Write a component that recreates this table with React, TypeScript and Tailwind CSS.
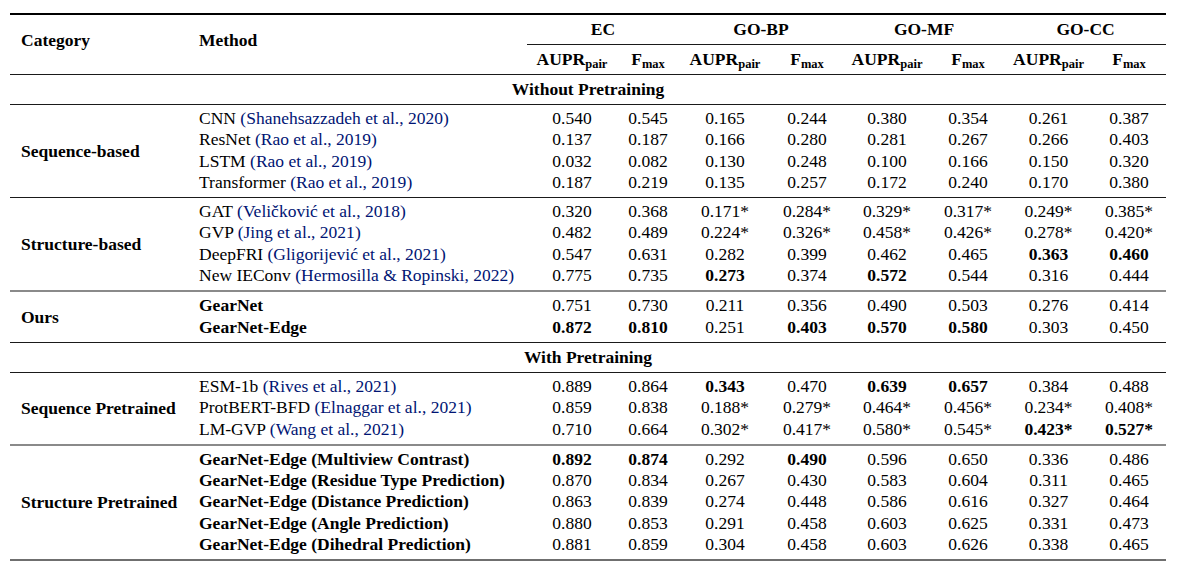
type Row = { name: string; cite?: string; bold?: boolean; vals: string[] };
type Group = { label: string; rule: string; rows: Row[] };

const thin = "border-b border-[#1a1a1a]";
const soft = "border-b-2 border-[#8a8a8a]";

const without: Group[] = [
  {
    label: "Sequence-based",
    rule: thin,
    rows: [
      { name: "CNN", cite: "Shanehsazzadeh et al., 2020", vals: ["0.540", "0.545", "0.165", "0.244", "0.380", "0.354", "0.261", "0.387"] },
      { name: "ResNet", cite: "Rao et al., 2019", vals: ["0.137", "0.187", "0.166", "0.280", "0.281", "0.267", "0.266", "0.403"] },
      { name: "LSTM", cite: "Rao et al., 2019", vals: ["0.032", "0.082", "0.130", "0.248", "0.100", "0.166", "0.150", "0.320"] },
      { name: "Transformer", cite: "Rao et al., 2019", vals: ["0.187", "0.219", "0.135", "0.257", "0.172", "0.240", "0.170", "0.380"] },
    ],
  },
  {
    label: "Structure-based",
    rule: soft,
    rows: [
      { name: "GAT", cite: "Veličković et al., 2018", vals: ["0.320", "0.368", "0.171*", "0.284*", "0.329*", "0.317*", "0.249*", "0.385*"] },
      { name: "GVP", cite: "Jing et al., 2021", vals: ["0.482", "0.489", "0.224*", "0.326*", "0.458*", "0.426*", "0.278*", "0.420*"] },
      { name: "DeepFRI", cite: "Gligorijević et al., 2021", vals: ["0.547", "0.631", "0.282", "0.399", "0.462", "0.465", "!0.363", "!0.460"] },
      { name: "New IEConv", cite: "Hermosilla & Ropinski, 2022", vals: ["0.775", "0.735", "!0.273", "0.374", "!0.572", "0.544", "0.316", "0.444"] },
    ],
  },
  {
    label: "Ours",
    rule: thin,
    rows: [
      { name: "GearNet", bold: true, vals: ["0.751", "0.730", "0.211", "0.356", "0.490", "0.503", "0.276", "0.414"] },
      { name: "GearNet-Edge", bold: true, vals: ["!0.872", "!0.810", "0.251", "!0.403", "!0.570", "!0.580", "0.303", "0.450"] },
    ],
  },
];

const withPre: Group[] = [
  {
    label: "Sequence Pretrained",
    rule: soft,
    rows: [
      { name: "ESM-1b", cite: "Rives et al., 2021", vals: ["0.889", "0.864", "!0.343", "0.470", "!0.639", "!0.657", "0.384", "0.488"] },
      { name: "ProtBERT-BFD", cite: "Elnaggar et al., 2021", vals: ["0.859", "0.838", "0.188*", "0.279*", "0.464*", "0.456*", "0.234*", "0.408*"] },
      { name: "LM-GVP", cite: "Wang et al., 2021", vals: ["0.710", "0.664", "0.302*", "0.417*", "0.580*", "0.545*", "!0.423*", "!0.527*"] },
    ],
  },
  {
    label: "Structure Pretrained",
    rule: "border-b-2 border-[#6f6f6f]",
    rows: [
      { name: "GearNet-Edge (Multiview Contrast)", bold: true, vals: ["!0.892", "!0.874", "0.292", "!0.490", "0.596", "0.650", "0.336", "0.486"] },
      { name: "GearNet-Edge (Residue Type Prediction)", bold: true, vals: ["0.870", "0.834", "0.267", "0.430", "0.583", "0.604", "0.311", "0.465"] },
      { name: "GearNet-Edge (Distance Prediction)", bold: true, vals: ["0.863", "0.839", "0.274", "0.448", "0.586", "0.616", "0.327", "0.464"] },
      { name: "GearNet-Edge (Angle Prediction)", bold: true, vals: ["0.880", "0.853", "0.291", "0.458", "0.603", "0.625", "0.331", "0.473"] },
      { name: "GearNet-Edge (Dihedral Prediction)", bold: true, vals: ["0.881", "0.859", "0.304", "0.458", "0.603", "0.626", "0.338", "0.465"] },
    ],
  },
];

function GroupRows({ g }: { g: Group }) {
  return (
    <>
      {g.rows.map((r, i) => {
        const first = i === 0;
        const last = i === g.rows.length - 1;
        const pad = `${first ? "pt-[3px]" : "pt-0"} ${last ? `pb-[4px] ${g.rule}` : "pb-0"}`;
        return (
          <tr key={r.name}>
            {first && (
              <td rowSpan={g.rows.length} className={`pl-[11px] align-middle font-bold text-left ${g.rule}`}>
                {g.label}
              </td>
            )}
            <td className={`pl-[11px] text-left whitespace-nowrap leading-[21.3px] ${pad} ${r.bold ? "font-bold" : ""}`}>
              {r.name}
              {r.cite && <span className="text-[#001473]"> ({r.cite})</span>}
            </td>
            {r.vals.map((v, j) => {
              const b = v.startsWith("!");
              return (
                <td key={j} className={`text-center whitespace-nowrap leading-[21.3px] ${pad} ${b ? "font-bold" : ""}`}>
                  {b ? v.slice(1) : v}
                </td>
              );
            })}
          </tr>
        );
      })}
    </>
  );
}

function Banner({ text }: { text: string }) {
  return (
    <tr>
      <td colSpan={10} className={`text-center font-bold leading-[29px] ${thin}`}>
        {text}
      </td>
    </tr>
  );
}

export default function App() {
  const tasks = ["EC", "GO-BP", "GO-MF", "GO-CC"];
  return (
    <div className="w-[1177px] h-[566px] bg-white pt-[13px] pl-[10px] text-black font-[family-name:Liberation_Serif,serif] text-[17.5px]">
      <table className="border-separate border-spacing-0 table-fixed w-[1156px]">
        <colgroup>
          <col className="w-[178px]" />
          <col className="w-[339px]" />
          <col className="w-[90px]" />
          <col className="w-[62px]" />
          <col className="w-[92px]" />
          <col className="w-[72px]" />
          <col className="w-[88px]" />
          <col className="w-[74px]" />
          <col className="w-[87px]" />
          <col className="w-[74px]" />
        </colgroup>
        <thead>
          <tr>
            <th rowSpan={2} className={`text-left pl-[11px] pb-[8px] align-middle font-bold border-t-2 border-t-black ${thin}`}>
              Category
            </th>
            <th rowSpan={2} className={`text-left pl-[11px] pb-[8px] align-middle font-bold border-t-2 border-t-black ${thin}`}>
              Method
            </th>
            {tasks.map((t) => (
              <th key={t} colSpan={2} className={`text-center font-bold leading-[29px] border-t-2 border-t-black ${thin}`}>
                {t}
              </th>
            ))}
          </tr>
          <tr>
            {tasks.map((t) => (
              <>
                <th key={t + "a"} className={`text-center font-bold leading-[29px] whitespace-nowrap ${thin}`}>
                  AUPR<sub className="text-[12.5px]">pair</sub>
                </th>
                <th key={t + "f"} className={`text-center font-bold leading-[29px] whitespace-nowrap ${thin}`}>
                  F<sub className="text-[12.5px]">max</sub>
                </th>
              </>
            ))}
          </tr>
        </thead>
        <tbody>
          <Banner text="Without Pretraining" />
          {without.map((g) => (
            <GroupRows key={g.label} g={g} />
          ))}
          <Banner text="With Pretraining" />
          {withPre.map((g) => (
            <GroupRows key={g.label} g={g} />
          ))}
        </tbody>
      </table>
    </div>
  );
}
